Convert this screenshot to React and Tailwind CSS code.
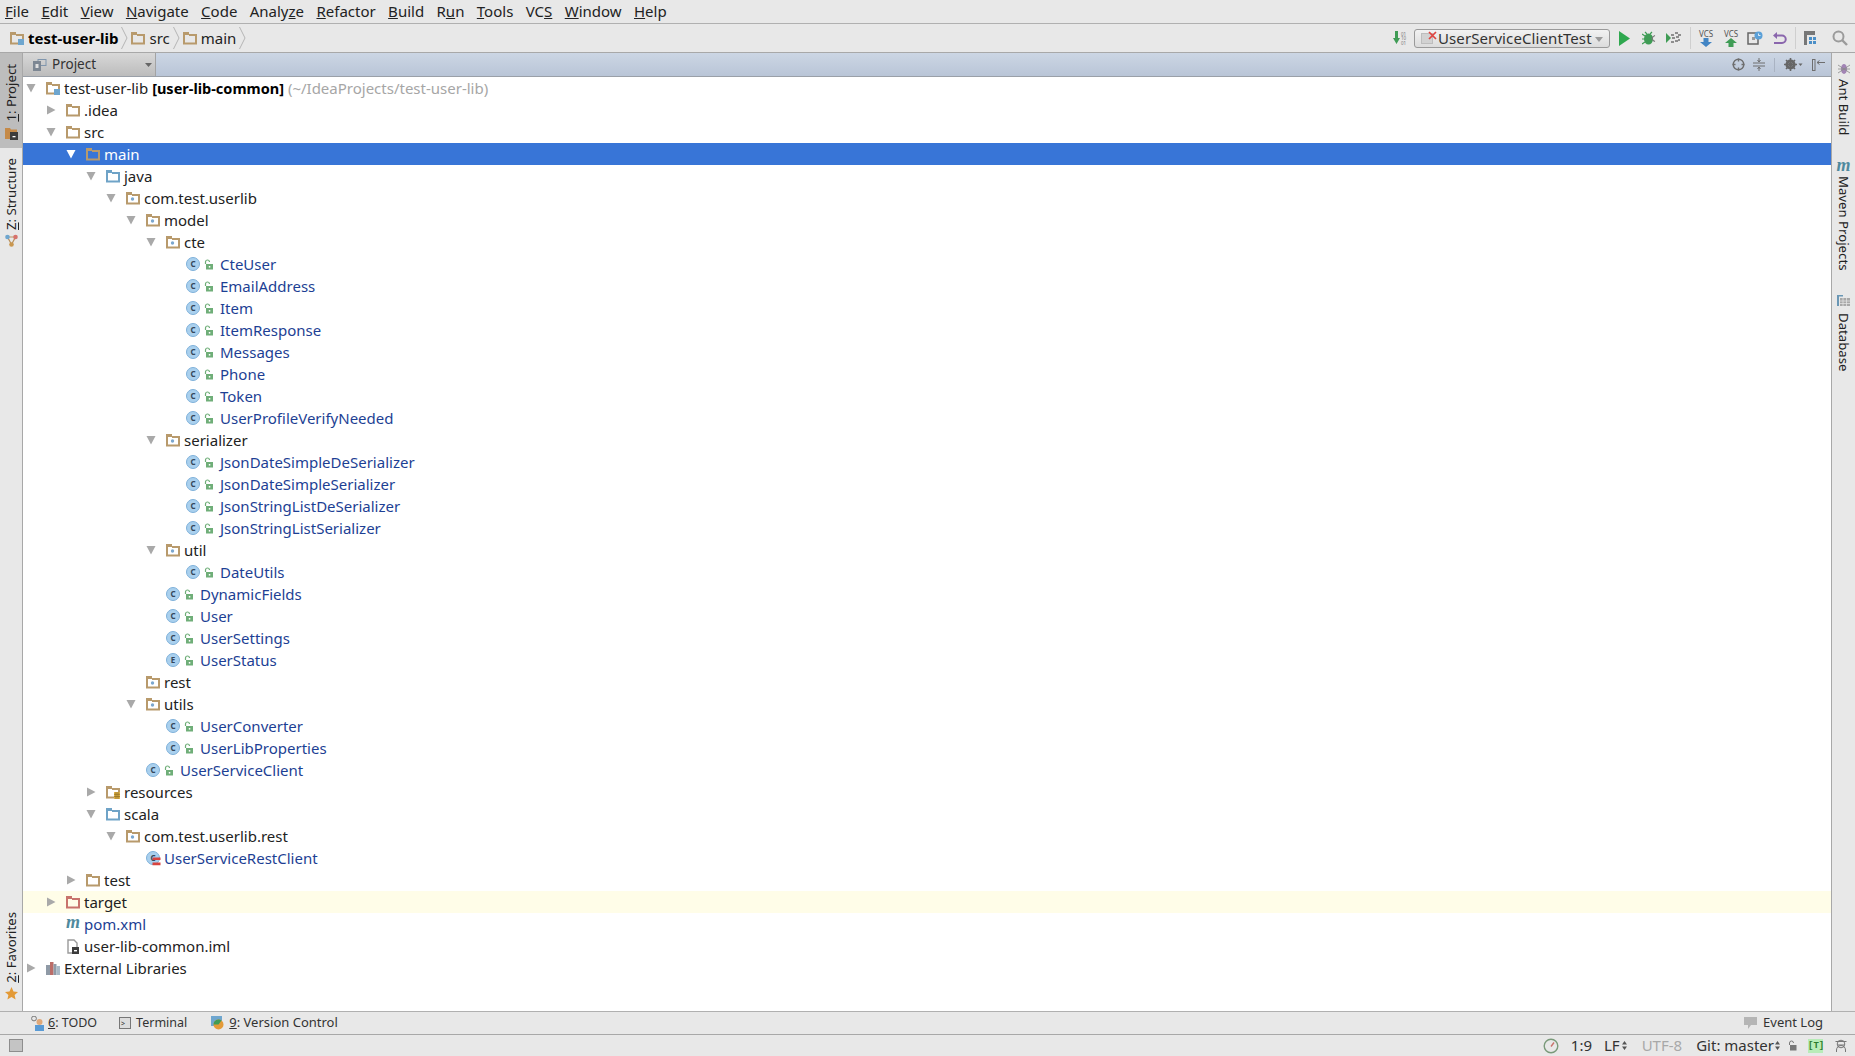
import React from 'react';

const MENU = [
  ['', 'F', 'ile'], ['', 'E', 'dit'], ['', 'V', 'iew'], ['', 'N', 'avigate'], ['', 'C', 'ode'],
  ['Analy', 'z', 'e'], ['', 'R', 'efactor'], ['', 'B', 'uild'], ['R', 'u', 'n'], ['', 'T', 'ools'],
  ['VC', 'S', ''], ['', 'W', 'indow'], ['', 'H', 'elp'],
];

const TREE = [
  { d: 0, a: 'down', i: 'module', root: true },
  { d: 1, a: 'right', i: 'folder', t: '.idea' },
  { d: 1, a: 'down', i: 'folder', t: 'src' },
  { d: 2, a: 'down', i: 'folder', t: 'main', selected: true },
  { d: 3, a: 'down', i: 'source', t: 'java' },
  { d: 4, a: 'down', i: 'package', t: 'com.test.userlib' },
  { d: 5, a: 'down', i: 'package', t: 'model' },
  { d: 6, a: 'down', i: 'package', t: 'cte' },
  { d: 7, i: 'class', t: 'CteUser' },
  { d: 7, i: 'class', t: 'EmailAddress' },
  { d: 7, i: 'class', t: 'Item' },
  { d: 7, i: 'class', t: 'ItemResponse' },
  { d: 7, i: 'class', t: 'Messages' },
  { d: 7, i: 'class', t: 'Phone' },
  { d: 7, i: 'class', t: 'Token' },
  { d: 7, i: 'class', t: 'UserProfileVerifyNeeded' },
  { d: 6, a: 'down', i: 'package', t: 'serializer' },
  { d: 7, i: 'class', t: 'JsonDateSimpleDeSerializer' },
  { d: 7, i: 'class', t: 'JsonDateSimpleSerializer' },
  { d: 7, i: 'class', t: 'JsonStringListDeSerializer' },
  { d: 7, i: 'class', t: 'JsonStringListSerializer' },
  { d: 6, a: 'down', i: 'package', t: 'util' },
  { d: 7, i: 'class', t: 'DateUtils' },
  { d: 6, i: 'class', t: 'DynamicFields' },
  { d: 6, i: 'class', t: 'User' },
  { d: 6, i: 'class', t: 'UserSettings' },
  { d: 6, i: 'enum', t: 'UserStatus' },
  { d: 5, i: 'package', t: 'rest' },
  { d: 5, a: 'down', i: 'package', t: 'utils' },
  { d: 6, i: 'class', t: 'UserConverter' },
  { d: 6, i: 'class', t: 'UserLibProperties' },
  { d: 5, i: 'class', t: 'UserServiceClient' },
  { d: 3, a: 'right', i: 'resources', t: 'resources' },
  { d: 3, a: 'down', i: 'source', t: 'scala' },
  { d: 4, a: 'down', i: 'package', t: 'com.test.userlib.rest' },
  { d: 5, i: 'scala', t: 'UserServiceRestClient' },
  { d: 2, a: 'right', i: 'folder', t: 'test' },
  { d: 1, a: 'right', i: 'excluded', t: 'target', highlight: true },
  { d: 1, i: 'maven', t: 'pom.xml', blue: true },
  { d: 1, i: 'iml', t: 'user-lib-common.iml' },
  { d: 0, a: 'right', i: 'libs', t: 'External Libraries' },
];

const Folder = ({ color = '#b89a6c', children }) => (
  <svg width="14" height="14" viewBox="0 0 14 14" className="shrink-0">
    <path d="M1 2.500h4.500M1 2v10.500h12V4H6" fill="none" stroke={color} strokeWidth="2" />
    <rect x="0" y="1" width="6" height="3" fill={color} />
    {children}
  </svg>
);

const Arrow = ({ dir, selected }) => (
  <svg width="10" height="10" viewBox="0 0 10 10" className="shrink-0">
    {dir === 'down' ? (
      <path d="M0.500 1h9L5 9.500z" fill={selected ? '#ffffff' : '#a9a9a9'} />
    ) : (
      <path d="M1 0.500v9l8.500-4.500z" fill="#a9a9a9" />
    )}
  </svg>
);

const ClassCircle = ({ letter = 'C' }) => (
  <span className="w-[14px] h-[14px] shrink-0 rounded-full bg-[#a9d0ee] border border-[#7fb1da] flex items-center justify-center text-[8px] font-bold leading-none text-[#33475c]">
    {letter}
  </span>
);

const Lock = () => (
  <svg width="10" height="11" viewBox="0 0 10 11" className="shrink-0">
    <path d="M1.500 5V3a2 2 0 0 1 4 0" fill="none" stroke="#6fae78" strokeWidth="1.200" />
    <rect x="2" y="5" width="7" height="5.500" fill="#6fae78" />
    <rect x="4.800" y="7" width="1.500" height="1.600" fill="#ffffff" />
  </svg>
);

const NodeIcon = ({ type }) => {
  if (type === 'folder') return <Folder />;
  if (type === 'excluded') return <Folder color="#c8736c" />;
  if (type === 'source') return <Folder color="#6fa3c7" />;
  if (type === 'package')
    return (
      <Folder>
        <circle cx="6.500" cy="8" r="1.700" fill="#7ba7cf" />
      </Folder>
    );
  if (type === 'resources')
    return (
      <Folder>
        <rect x="8" y="7" width="6" height="7" fill="#e0b24a" />
        <path d="M8 9.300h6M8 11.600h6M10 7v7M12 7v7" stroke="#8a6a20" strokeWidth="0.700" />
      </Folder>
    );
  if (type === 'module')
    return (
      <Folder>
        <rect x="8" y="8" width="6" height="6" fill="#6ea6cf" />
      </Folder>
    );
  if (type === 'maven')
    return <span className="w-[14px] shrink-0 text-[18px] font-bold italic leading-none -translate-y-[2px] text-[#4f8a9e] font-['Liberation_Serif',serif]">m</span>;
  if (type === 'iml')
    return (
      <svg width="14" height="15" viewBox="0 0 14 15" className="shrink-0">
        <path d="M2 1h6l3 3v10H2z" fill="#ffffff" stroke="#9a9a9a" strokeWidth="1.400" />
        <rect x="6" y="8" width="7" height="7" fill="#3c3c3c" />
        <rect x="8" y="11" width="3" height="1.400" fill="#ffffff" />
      </svg>
    );
  if (type === 'libs')
    return (
      <svg width="14" height="14" viewBox="0 0 14 14" className="shrink-0">
        <rect x="0" y="4" width="4" height="10" fill="#8f9aa6" />
        <rect x="4" y="1" width="3.500" height="13" fill="#bb6d68" />
        <rect x="7.500" y="3" width="3" height="11" fill="#8f9aa6" />
        <rect x="10.500" y="5" width="3.500" height="9" fill="#a9b9c6" />
      </svg>
    );
  if (type === 'scala')
    return (
      <span className="relative w-[14px] h-[14px] shrink-0">
        <ClassCircle />
        <svg width="9" height="9" viewBox="0 0 9 9" className="absolute left-[6px] top-[6px]">
          <path d="M0.500 0.500h8v2.400h-8zM0.500 5.500h8v2.800h-8z" fill="#d8433e" />
        </svg>
      </span>
    );
  return null;
};

const TreeRow = ({ node }) => {
  const isClass = node.i === 'class' || node.i === 'enum';
  const isBlue = isClass || node.i === 'scala' || node.blue;
  return (
    <div
      className={`relative h-[22px] flex items-center ${node.selected ? 'bg-[#3875d7] text-white' : node.highlight ? 'bg-[#fffde8]' : ''}`}
      style={{ paddingLeft: 3 + node.d * 20 }}
    >
      <span className="w-[20px] shrink-0 flex items-center">{node.a && <Arrow dir={node.a} selected={node.selected} />}</span>
      {isClass ? (
        <span className="flex items-center gap-[4px] w-[34px] shrink-0">
          <ClassCircle letter={node.i === 'enum' ? 'E' : 'C'} />
          <Lock />
        </span>
      ) : (
        <span className="w-[18px] shrink-0 flex items-center"><NodeIcon type={node.i} /></span>
      )}
      {node.root ? (
        <span className="text-[#222222]">
          test-user-lib <span className="font-bold text-black text-[14.5px]">[user-lib-common]</span>{' '}
          <span className="text-[#a6a6a6]">(~/IdeaProjects/test-user-lib)</span>
        </span>
      ) : (
        <span className={node.selected ? '' : isBlue ? 'text-[#1d3f94]' : 'text-[#222222]'}>{node.t}</span>
      )}
    </div>
  );
};

const Crumb = () => (
  <svg width="7" height="24" viewBox="0 0 7 24" className="shrink-0 mx-[3px]">
    <path d="M0.500 1l5.500 11-5.500 11" fill="none" stroke="#b5b5b5" strokeWidth="1" />
  </svg>
);

const Divider = () => <span className="block w-px h-[22px] bg-[#cfcfcf]" />;

const VcsIcon = ({ up }) => (
  <span className="w-[16px] flex flex-col items-center leading-none">
    <span className="text-[8px] text-[#555555] leading-[9px]">VCS</span>
    <svg width="12" height="9" viewBox="0 0 12 9">
      {up ? <path d="M6 0l6 5H8.500v4h-5V5H0z" fill="#3f9c55" /> : <path d="M3.500 0h5v4H12L6 9 0 4h3.500z" fill="#4285c4" />}
    </svg>
  </span>
);

const Toolbar = () => (
  <div className="ml-auto flex items-center h-full">
    <svg width="16" height="14" viewBox="0 0 16 14" className="mr-[5px]">
      <path d="M2 0h3v7h2L3.500 13 0 7h2z" fill="#3f9c55" />
      <text x="8" y="4.500" fontSize="4.500" fill="#777777">01</text>
      <text x="8" y="9" fontSize="4.500" fill="#777777">10</text>
      <text x="8" y="13.500" fontSize="4.500" fill="#777777">01</text>
    </svg>
    <div className="relative h-[19px] w-[196px] border border-[#9a9a9a] rounded-[3px] bg-gradient-to-b from-[#f2f2f2] to-[#dcdcdc] flex items-center pl-[23px]">
      <span className="absolute left-[6px] top-[3px] w-[12px] h-[11px] bg-[#d2d2d2] border border-[#bdbdbd]" />
      <svg width="9" height="9" viewBox="0 0 9 9" className="absolute left-[13px] top-px">
        <path d="M1 1l7 7M8 1L1 8" stroke="#e0443e" strokeWidth="1.700" />
      </svg>
      <span className="text-[#333333] leading-none tracking-[0.1px]">UserServiceClientTest</span>
      <svg width="8" height="5" viewBox="0 0 8 5" className="absolute right-[6px] top-[7px]">
        <path d="M0 0h8L4 5z" fill="#9a9a9a" />
      </svg>
    </div>
    <svg width="13" height="15" viewBox="0 0 13 15" className="ml-[8px]"><path d="M1 0l11 7.500L1 15z" fill="#2fa84f" /></svg>
    <svg width="15" height="15" viewBox="0 0 15 15" className="ml-[11px]">
      <ellipse cx="6.500" cy="8" rx="4.500" ry="5.500" fill="#3f9c55" />
      <path d="M3 1l2 2M10 1L8 3M0 8h3M0 13l3-2M0 3l3 2" stroke="#3f9c55" strokeWidth="1.200" />
      <path d="M13 4.500a4.500 4.500 0 0 0-3 3 4.500 4.500 0 0 0 3 3" fill="none" stroke="#777777" strokeWidth="1.200" />
    </svg>
    <svg width="15" height="14" viewBox="0 0 15 14" className="ml-[9px]">
      <path d="M0 2l5 5-5 5z" fill="#3f9c55" />
      <path d="M5 3h3v2H5zM9 1h3v2H9zM6 6h3v2H6zM10 5h3v2h-3zM5 10h3v2H5zM9 9h3v2H9zM12 3h3v2h-3zM12 8h2v2h-2z" fill="#8e8e8e" />
    </svg>
    <span className="ml-[9px] mr-[7px]"><Divider /></span>
    <VcsIcon />
    <span className="ml-[9px]"><VcsIcon up /></span>
    <svg width="16" height="15" viewBox="0 0 16 15" className="ml-[8px]">
      <rect x="1" y="2" width="10" height="11" fill="none" stroke="#666666" strokeWidth="1.500" />
      <rect x="5" y="6" width="3" height="3" fill="#999999" />
      <circle cx="11.500" cy="4.500" r="4" fill="#5aa0d8" />
      <path d="M11.500 2.500v2h2" fill="none" stroke="#ffffff" strokeWidth="0.800" />
    </svg>
    <svg width="15" height="14" viewBox="0 0 15 14" className="ml-[9px]">
      <path d="M5 1L1 4.500 5 8V5.500h5a2.750 2.750 0 0 1 0 5.500H2v2h8a4.750 4.750 0 0 0 0-9.500H5z" fill="#8a66ad" />
    </svg>
    <span className="ml-[8px] mr-[7px]"><Divider /></span>
    <svg width="16" height="16" viewBox="0 0 16 16">
      <rect x="1" y="1" width="11" height="4" fill="#777777" />
      <rect x="1" y="5" width="3" height="10" fill="#777777" />
      <path d="M6 7h3v3H6zM10 7h3v3h-3zM6 11h3v3H6zM10 11h3v3h-3z" fill="#4b8fc7" />
    </svg>
    <svg width="16" height="16" viewBox="0 0 16 16" className="ml-[13px]">
      <circle cx="6.500" cy="6.500" r="5" fill="none" stroke="#9b9b9b" strokeWidth="2" />
      <path d="M10 10l5 5" stroke="#9b9b9b" strokeWidth="2.400" />
    </svg>
  </div>
);

const HeaderActions = () => (
  <div className="ml-auto flex items-center gap-[9px] pr-[6px]">
    <svg width="13" height="13" viewBox="0 0 13 13" className="-mr-px">
      <circle cx="6.500" cy="6.500" r="5.300" fill="none" stroke="#6e6e6e" strokeWidth="1.400" />
      <path d="M6.500 0.500v3M6.500 9.500v3M0.500 6.500h3M9.500 6.500h3" stroke="#6e6e6e" strokeWidth="1.400" />
    </svg>
    <svg width="12" height="13" viewBox="0 0 12 13">
      <path d="M0 5h12M0 8h12M6 0v4M6 9v4M4.500 2L6 4l1.500-2M4.500 11L6 9l1.500 2" fill="none" stroke="#6e6e6e" />
    </svg>
    <span className="w-px h-[14px] bg-[#a9b3c2]" />
    <svg width="19" height="13" viewBox="0 0 19 13">
      <circle cx="6.500" cy="6.500" r="3.800" fill="none" stroke="#666666" strokeWidth="2.600" />
      <path d="M6.500 0v13M0 6.500h13M2 2l9 9M11 2l-9 9" stroke="#666666" strokeWidth="1.600" />
      <path d="M14.500 5.500h4l-2 2.500z" fill="#666666" />
    </svg>
    <svg width="13" height="12" viewBox="0 0 13 12">
      <rect x="0.500" y="0.500" width="2.500" height="11" fill="none" stroke="#6e6e6e" />
      <path d="M5 3.500h8M7.500 1.500L5 3.500l2.500 2" fill="none" stroke="#6e6e6e" />
    </svg>
  </div>
);

export default function App() {
  return (
    <div className="w-[1855px] h-[1056px] overflow-hidden flex flex-col bg-[#e8e8e8] text-[15px] text-[#222222] font-['Noto_Sans','Open_Sans',sans-serif]">
      {/* menu */}
      <div className="h-[24px] shrink-0 flex items-center pl-[5px] gap-[12.4px] border-b border-[#b0b0b0]">
        {MENU.map(([a, u, b]) => (
          <span key={a + u + b}>
            {a}<span className="underline">{u}</span>{b}
          </span>
        ))}
      </div>
      {/* breadcrumb and toolbar */}
      <div className="h-[29px] shrink-0 flex items-center pl-[10px] pr-[7px] border-b border-[#a8a8a8]">
        <span className="mr-[4px]"><NodeIcon type="module" /></span>
        <span className="font-bold text-black">test-user-lib</span>
        <Crumb />
        <span className="mr-[4px]"><NodeIcon type="folder" /></span>
        <span>src</span>
        <Crumb />
        <span className="mr-[4px]"><NodeIcon type="folder" /></span>
        <span>main</span>
        <Crumb />
        <Toolbar />
      </div>
      {/* middle */}
      <div className="flex-1 min-h-0 flex">
        <div className="w-[23px] shrink-0 flex flex-col border-r border-[#a8a8a8]">
          <div className="h-[95px] bg-[#bdbdbd] flex flex-col-reverse items-center pb-[8px] gap-[5px]">
            <svg width="13" height="13" viewBox="0 0 13 13">
              <path d="M0 1h5l1 1.500h6V12H0z" fill="#c58a48" />
              <rect x="5" y="5" width="8" height="8" fill="#3c3c3c" />
              <rect x="7.500" y="9" width="3" height="1.300" fill="#ffffff" />
            </svg>
            <span className="[writing-mode:vertical-rl] rotate-180 text-[13.2px] leading-[22px]"><span className="underline">1</span>: Project</span>
          </div>
          <div className="h-[105px] flex flex-col-reverse items-center pb-[6px] gap-[4px]">
            <svg width="13" height="13" viewBox="0 0 13 13">
              <path d="M2.500 3l4 7.500 4-7.500z" fill="none" stroke="#b98f5a" strokeWidth="1.200" />
              <circle cx="2.500" cy="3" r="2.300" fill="#6ea6cf" />
              <circle cx="10.500" cy="3" r="2.300" fill="#d6726c" />
              <circle cx="6.500" cy="10.500" r="2.300" fill="#c9974f" />
            </svg>
            <span className="[writing-mode:vertical-rl] rotate-180 text-[13.2px] leading-[22px]"><span className="underline">Z</span>: Structure</span>
          </div>
          <div className="mt-auto flex flex-col-reverse items-center pb-[11px] gap-[4px]">
            <svg width="13" height="13" viewBox="0 0 13 13"><path d="M6.500 0l2 4.400 4.500.5-3.400 3 1 4.600-4.100-2.400-4.100 2.400 1-4.600L0 4.900l4.500-.5z" fill="#e39a37" /></svg>
            <span className="[writing-mode:vertical-rl] rotate-180 text-[13.2px] leading-[22px]"><span className="underline">2</span>: Favorites</span>
          </div>
        </div>
        <div className="flex-1 min-w-0 flex flex-col bg-white">
          <div className="h-[24px] shrink-0 flex items-center bg-gradient-to-b from-[#ccd6e4] to-[#b9c5d7] border-b border-[#9aa0a8]">
            <div className="w-[133px] h-full flex items-center pl-[10px] gap-[5px] bg-gradient-to-b from-[#d8d8d8] to-[#bcbcbc] border-r border-[#a3a3a3]">
              <svg width="14" height="12" viewBox="0 0 14 12">
                <rect x="5" y="0.500" width="8" height="6" fill="none" stroke="#7f95ad" />
                <rect x="0" y="2" width="8" height="10" fill="#7d8793" />
                <rect x="2.500" y="5" width="3" height="4" fill="#e0e0e0" />
              </svg>
              <span className="text-[13.5px] text-[#333333]">Project</span>
              <svg width="7" height="4" viewBox="0 0 7 4" className="ml-auto mr-[3px]"><path d="M0 0h7L3.500 4z" fill="#666666" /></svg>
            </div>
            <HeaderActions />
          </div>
          <div className="flex-1 min-h-0 overflow-hidden">
            {TREE.map((node, i) => <TreeRow key={i} node={node} />)}
          </div>
        </div>
        <div className="w-[24px] shrink-0 flex flex-col items-center border-l border-[#a8a8a8]">
          <div className="flex flex-col items-center gap-[4px] pt-[9px] h-[105px]">
            <svg width="12" height="13" viewBox="0 0 12 13">
              <ellipse cx="6" cy="7" rx="3" ry="5" fill="#a284b5" />
              <path d="M0 3l12 8M12 3L0 11M0 7h12" stroke="#8a8a8a" strokeWidth="0.800" />
            </svg>
            <span className="[writing-mode:vertical-rl] text-[13.2px] leading-[22px]">Ant Build</span>
          </div>
          <div className="flex flex-col items-center gap-[3px] h-[136px]">
            <span className="text-[18px] font-bold italic leading-[15px] text-[#4f8a9e] font-['Liberation_Serif',serif]">m</span>
            <span className="[writing-mode:vertical-rl] text-[13.2px] leading-[22px]">Maven Projects</span>
          </div>
          <div className="flex flex-col items-center gap-[6px]">
            <svg width="13" height="13" viewBox="0 0 13 13">
              <path d="M0 1h6v1.500h-4V12H0z" fill="#6a97b5" />
              <rect x="3" y="4" width="10" height="8" fill="#a8a8a8" />
              <path d="M3 7h10M3 9.500h10M6 4v8M9.500 4v8" stroke="#e8e8e8" strokeWidth="0.700" />
            </svg>
            <span className="[writing-mode:vertical-rl] text-[13.2px] leading-[22px]">Database</span>
          </div>
        </div>
      </div>
      {/* tool windows bar */}
      <div className="h-[23px] shrink-0 flex items-center border-t border-[#b0b0b0] pl-[31px] text-[12.5px] text-[#333333]">
        <svg width="14" height="15" viewBox="0 0 14 15" className="mr-[3px]">
          <circle cx="3" cy="2.500" r="2.400" fill="none" stroke="#777777" />
          <circle cx="8.500" cy="6" r="3" fill="#e0a878" />
          <rect x="4" y="9" width="9" height="6" fill="#5a9bd5" />
        </svg>
        <span><span className="underline">6</span>: TODO</span>
        <span className="ml-[22px] w-[12px] h-[12px] bg-[#dddddd] border border-[#777777] flex items-center text-[7px] leading-none pl-px">&gt;</span>
        <span className="ml-[5px]">Terminal</span>
        <svg width="13" height="14" viewBox="0 0 13 14" className="ml-[24px] mr-[5px]">
          <rect x="0" y="0" width="11" height="10" fill="#6ea6cf" />
          <circle cx="7.500" cy="8.500" r="5" fill="#e39a37" />
          <path d="M2.500 8.500a5 5 0 0 1 8-4l-3 4z" fill="#3f9c55" />
        </svg>
        <span className="text-[13px]"><span className="underline">9</span>: Version Control</span>
        <span className="ml-auto flex items-center gap-[6px] pr-[32px] text-[13px]">
          <svg width="13" height="12" viewBox="0 0 13 12"><path d="M0 0h13v8H7l-3 4V8H0z" fill="#b5b5b5" /></svg>
          Event Log
        </span>
      </div>
      {/* status bar */}
      <div className="h-[22px] shrink-0 flex items-center border-t border-[#a8a8a8] pl-[9px] text-[15px] text-[#333333]">
        <span className="w-[14px] h-[13px] bg-[#c4c4c4] border border-[#8d8d8d]" />
        <div className="ml-auto flex items-center pr-[8px]">
          <svg width="16" height="16" viewBox="0 0 16 16">
            <circle cx="8" cy="8" r="6.800" fill="none" stroke="#7a9a7a" strokeWidth="1.400" />
            <path d="M8 8.500l3-4" stroke="#c8736c" strokeWidth="1.400" />
          </svg>
          <span className="ml-[12px]">1:9</span>
          <span className="ml-[12px]">LF</span>
          <svg width="5" height="9" viewBox="0 0 5 9" className="ml-[2px]"><path d="M0 3.500h5L2.500 0zM0 5.500h5L2.500 9z" fill="#555555" /></svg>
          <span className="ml-[15px] text-[#a8a8a8]">UTF-8</span>
          <span className="ml-[14px]">Git: master</span>
          <svg width="5" height="9" viewBox="0 0 5 9" className="ml-[1px]"><path d="M0 3.500h5L2.500 0zM0 5.500h5L2.500 9z" fill="#555555" /></svg>
          <svg width="9" height="11" viewBox="0 0 9 11" className="ml-[8px]">
            <path d="M1.500 5V3a2 2 0 0 1 4 0" fill="none" stroke="#777777" />
            <rect x="2" y="5" width="6.500" height="5.500" fill="#777777" />
          </svg>
          <span className="ml-[11px] w-[15px] h-[14px] bg-[#b8ecb8] text-[9px] font-bold leading-[14px] text-center text-[#2d7a2d] font-['Liberation_Mono',monospace]">[T]</span>
          <svg width="12" height="15" viewBox="0 0 12 15" className="ml-[12px]">
            <circle cx="6" cy="6" r="3.800" fill="none" stroke="#777777" />
            <path d="M0.500 3.500h11M1.500 14v-2a4.500 4.500 0 0 1 9 0v2M2.500 7h7" fill="none" stroke="#777777" />
          </svg>
        </div>
      </div>
    </div>
  );
}
